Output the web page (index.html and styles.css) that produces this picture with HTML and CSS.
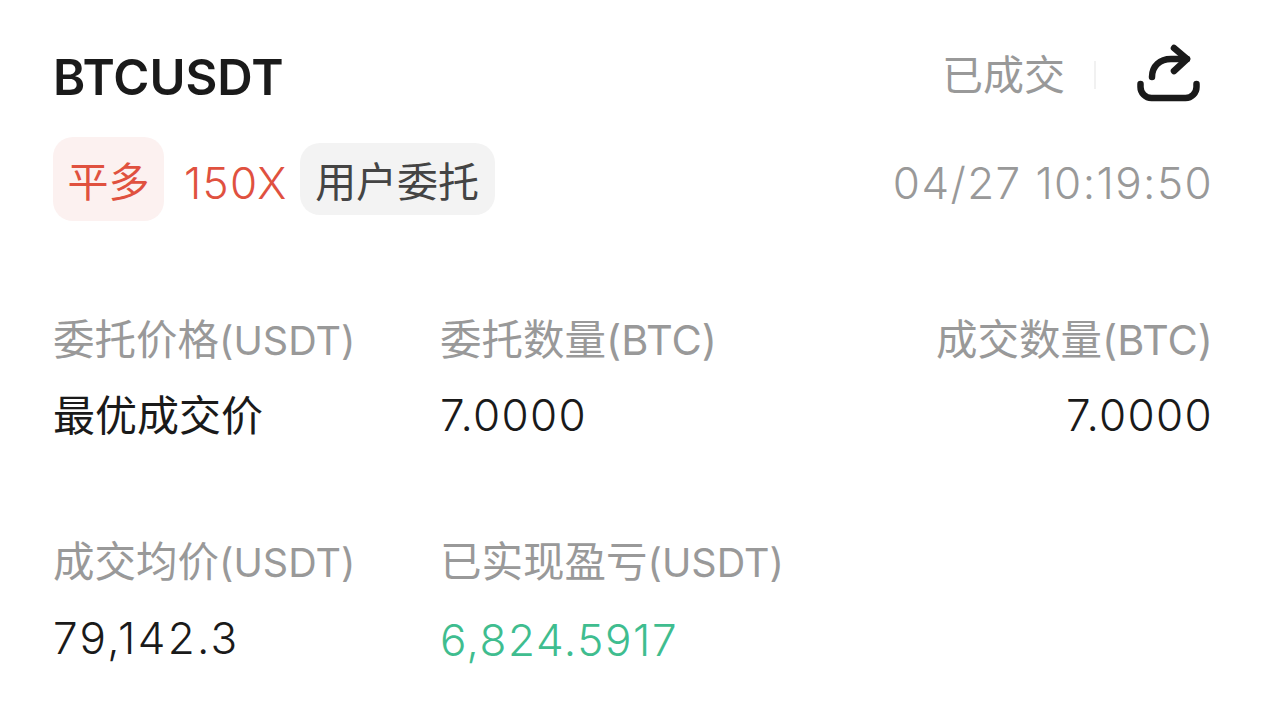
FILE: index.html
```html
<!DOCTYPE html>
<html lang="zh-CN">
<head>
  <meta charset="UTF-8" />
  <title>BTCUSDT</title>
  <link rel="stylesheet" href="styles.css">
</head>
<body>
  <div class="card">
    <div class="head">
      <div class="symbol">BTCUSDT</div>
      <div class="head-right">
        <span class="status">已成交</span>
        <span class="divider"></span>
        <svg class="share" width="66" height="62" viewBox="0 0 66 62" fill="none" stroke="#1a1a1a" stroke-width="6.5" stroke-linecap="round" stroke-linejoin="round">
          <path d="M5.5 42v3a11 11 0 0 0 11 11h34a11 11 0 0 0 11-11v-3" />
          <path d="M17 35c0-11 8-18 19-18h16" />
          <path d="M39 6l13 11-13 12" />
        </svg>
      </div>
    </div>
    <div class="tags">
      <div class="tags-left">
        <span class="tag tag-red">平多</span>
        <span class="leverage num">150X</span>
        <span class="tag tag-gray">用户委托</span>
      </div>
      <span class="time num">04/27 10:19:50</span>
    </div>
    <div class="fields">
      <div class="field">
        <label>委托价格<span class="unit">(USDT)</span></label>
        <p>最优成交价</p>
      </div>
      <div class="field">
        <label>委托数量<span class="unit btc">(BTC)</span></label>
        <p class="num">7.0000</p>
      </div>
      <div class="field right">
        <label>成交数量<span class="unit btc">(BTC)</span></label>
        <p class="num">7.0000</p>
      </div>
      <div class="field">
        <label>成交均价<span class="unit">(USDT)</span></label>
        <p class="num wide">79,142.3</p>
      </div>
      <div class="field">
        <label>已实现盈亏<span class="unit">(USDT)</span></label>
        <p class="num green">6,824.5917</p>
      </div>
    </div>
  </div>
</body>
</html>
```

FILE: styles.css
```css
html, body {
  margin: 0;
  background: #fff;
}
body {
  font-family: Inter, "Noto Sans CJK SC", sans-serif;
  color: #1a1a1a;
  overflow: hidden;
}
.card {
  padding: 40px 52px 0 53px;
}
.head {
  display: flex;
  justify-content: space-between;
  align-items: center;
  height: 70px;
}
.symbol {
  font-size: 49px;
  font-weight: 600;
  margin-top: 4px;
}
.head-right {
  display: flex;
  align-items: center;
  margin-right: 10px;
}
.status {
  font-size: 41px;
  color: #999;
  margin-bottom: 6px;
}
.divider {
  width: 2px;
  height: 28px;
  background: #f1f1f1;
  margin: 0 39px 0 29px;
}
.share {
  margin-bottom: 4px;
}
.tags {
  display: flex;
  justify-content: space-between;
  align-items: center;
  margin-top: 27px;
}
.tags-left {
  display: flex;
  align-items: center;
}
.tag {
  font-size: 41px;
  display: flex;
  align-items: center;
  justify-content: center;
}
.tag-red {
  width: 111px;
  height: 84px;
  background: #fcf1f0;
  color: #e0513f;
  border-radius: 20px;
}
.leverage {
  color: #e0513f;
  margin: 8px 12px 0 20px;
}
.tag-gray {
  width: 195px;
  height: 72px;
  background: #f3f3f3;
  color: #444;
  border-radius: 20px;
}
.fields {
  display: grid;
  grid-template-columns: 387px 1fr auto;
  row-gap: 90px;
  margin-top: 91px;
}
.field label {
  display: block;
  font-size: 41.5px;
  line-height: 56px;
  color: #999;
}
.unit {
  font-size: 39.5px;
}
.unit.btc {
  font-size: 41.5px;
}
.field p {
  margin: 19px 0 0;
  font-size: 42px;
  line-height: 56px;
}
.field .num, .num {
  font-size: 44px;
  font-weight: 300;
  letter-spacing: 1.3px;
}
.field .wide {
  letter-spacing: 2.3px;
}
.field .green {
  color: #3fbd8f;
  letter-spacing: 1.6px;
  margin-top: 21px;
}
.time.num {
  color: #999;
  letter-spacing: 1.4px;
  margin: 7px -2px 0 0;
}
.right {
  text-align: right;
  margin-right: -2px;
}
```
